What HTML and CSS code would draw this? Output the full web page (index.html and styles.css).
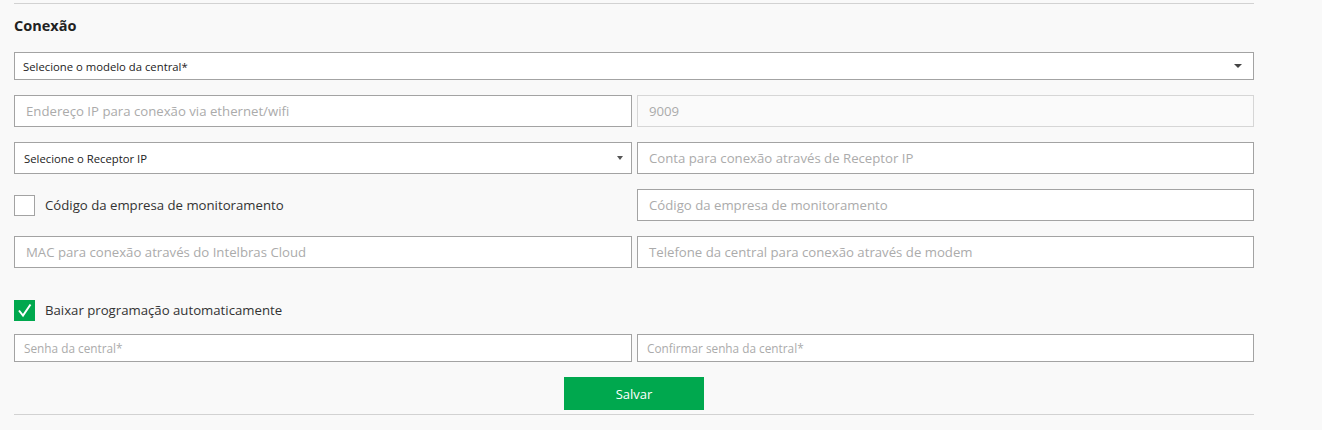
FILE: index.html
```html
<!DOCTYPE html>
<html lang="pt-BR">
<head>
<meta charset="utf-8">
<title>Conexão</title>
<link rel="stylesheet" href="styles.css">
</head>
<body>
<div class="page">
  <div class="rule"></div>
  <h2 class="title">Conexão</h2>
  <div class="select select-main">
    <span class="select-text">Selecione o modelo da central*</span>
    <span class="caret caret-lg"></span>
  </div>
  <div class="grid">
    <div class="field"><span class="ph">Endereço IP para conexão via ethernet/wifi</span></div>
    <div class="field field-disabled"><span class="ph">9009</span></div>

    <div class="select select-row">
      <span class="select-text select-text-sm">Selecione o Receptor IP</span>
      <span class="caret caret-sm"></span>
    </div>
    <div class="field"><span class="ph">Conta para conexão através de Receptor IP</span></div>

    <label class="check-row">
      <span class="box"></span>
      <span class="check-label">Código da empresa de monitoramento</span>
    </label>
    <div class="field"><span class="ph">Código da empresa de monitoramento</span></div>

    <div class="field"><span class="ph">MAC para conexão através do Intelbras Cloud</span></div>
    <div class="field"><span class="ph">Telefone da central para conexão através de modem</span></div>
  </div>

  <label class="check-row check-auto">
    <span class="box box-on">
      <svg viewBox="0 0 21 21" width="21" height="21"><path d="M5 10.5 L9 15.5 L16.5 4.5" fill="none" stroke="#fff" stroke-width="2"/></svg>
    </span>
    <span class="check-label">Baixar programação automaticamente</span>
  </label>

  <div class="pw-row">
    <div class="field field-pw"><span class="ph ph-sm">Senha da central*</span></div>
    <div class="field field-pw"><span class="ph ph-sm">Confirmar senha da central*</span></div>
  </div>

  <div class="actions">
    <button class="btn" type="button">Salvar</button>
  </div>
  <div class="rule rule-bottom"></div>
</div>
</body>
</html>
```
FILE: styles.css
```css
html, body {
  margin: 0;
  padding: 0;
  background: #f9f9f9;
}
body {
  font-family: "Open Sans", "Noto Sans", sans-serif;
  color: #333;
}
.page {
  width: 1240px;
  margin-left: 14px;
  padding-top: 3px;
  display: flex;
  flex-direction: column;
}
.rule {
  height: 1px;
  background: #d2d2d2;
}
.title {
  margin: 12px 0 0;
  height: 20px;
  line-height: 20px;
  font-size: 14.5px;
  font-weight: 700;
  color: #222;
}
.select {
  box-sizing: border-box;
  background: #fff;
  border: 1px solid #a3a3a3;
  display: flex;
  align-items: center;
  justify-content: space-between;
}
.select-main {
  margin-top: 16px;
  height: 28px;
  padding: 0 11px 0 8px;
}
.select-row {
  height: 32px;
  padding: 0 8px 0 9px;
}
.select-text {
  font-size: 11.3px;
  color: #222;
}
.select-text-sm {
  font-size: 11.3px;
}
.caret {
  width: 0;
  height: 0;
  border-left: 4px solid transparent;
  border-right: 4px solid transparent;
  border-top: 4px solid #444;
}
.caret-sm {
  border-left-width: 3px;
  border-right-width: 3px;
  border-top-width: 4px;
  border-top-color: #555;
}
.grid {
  margin-top: 15px;
  display: grid;
  grid-template-columns: 618px 617px;
  grid-auto-rows: 32px;
  column-gap: 5px;
  row-gap: 15px;
}
.field {
  box-sizing: border-box;
  height: 32px;
  background: #fff;
  border: 1px solid #a3a3a3;
  display: flex;
  align-items: center;
  padding-left: 11px;
}
.field-disabled {
  background: #fafafa;
  border-color: #d6d6d6;
}
.ph {
  font-size: 13.2px;
  color: #ababab;
}
.ph-sm {
  font-size: 11.8px;
}
.check-row {
  display: flex;
  align-items: center;
  gap: 10px;
}
.box {
  box-sizing: border-box;
  width: 21px;
  height: 21px;
  background: #fff;
  border: 1px solid #a3a3a3;
  display: flex;
}
.box-on {
  background: #00a84e;
  border-color: #00a84e;
}
.box-on svg {
  margin: -1px;
}
.check-label {
  font-size: 13.2px;
  color: #333;
}
.check-auto {
  margin-top: 31px;
  height: 22px;
}
.pw-row {
  margin-top: 13px;
  display: grid;
  grid-template-columns: 618px 617px;
  column-gap: 5px;
}
.field-pw {
  height: 28px;
  padding-left: 9px;
}
.actions {
  margin-top: 15px;
  display: flex;
  justify-content: center;
}
.btn {
  width: 140px;
  height: 33px;
  border: none;
  background: #00a84e;
  color: #fff;
  font-family: "Open Sans", "Noto Sans", sans-serif;
  font-size: 13px;
  padding: 0;
}
.rule-bottom {
  margin-top: 4px;
}
```
